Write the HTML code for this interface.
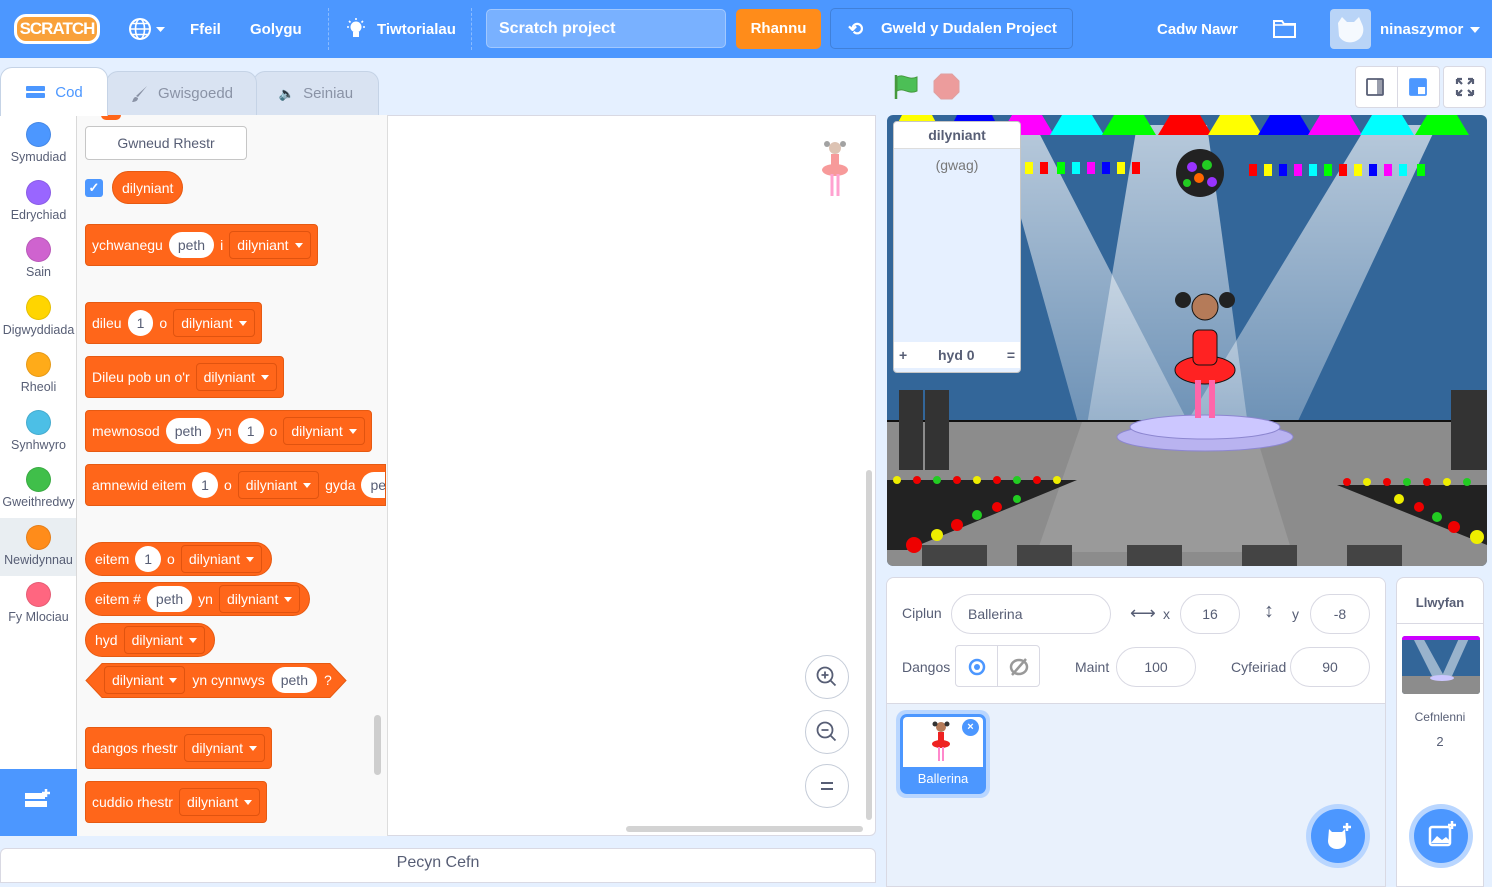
<!DOCTYPE html>
<html><head><meta charset="utf-8"><style>
*{box-sizing:border-box;margin:0;padding:0}
body{width:1492px;height:877px;overflow:hidden;background:#e5f0ff;font-family:"Liberation Sans",sans-serif;position:relative;color:#575e75}
.a{position:absolute}
.top{left:0;top:0;width:1492px;height:58px;background:#4c97ff;color:#fff;font-weight:bold;font-size:15px}
.top .a{white-space:nowrap}
.tab{top:71px;height:44px;background:#d9e3f2;border:1px solid #c5d3e6;border-bottom:none;border-radius:12px 12px 0 0;font-size:15px;color:#8a93a6;display:flex;align-items:center;justify-content:center;gap:8px}
.cat{width:77px;text-align:center;font-size:12.5px;color:#575e75}
.cat i{display:block;width:25px;height:25px;border-radius:50%;margin:0 auto 3px;border:1px solid rgba(0,0,0,.1)}
.blk{position:absolute;left:85px;height:42px;background:#ff661a;border:1px solid #e65a12;border-radius:4px;display:flex;align-items:center;padding:0 6px;gap:6px;color:#fff;font-size:14px;white-space:nowrap}
.blk.r{border-radius:17px;height:34px;padding:0 9px}
.in{background:#fff;color:#575e75;border-radius:13px;height:26px;padding:0 9px;display:flex;align-items:center}
.dd{border:1px solid #e0530f;background:#ff661a;height:28px;border-radius:4px;padding:0 7px;display:flex;align-items:center;gap:6px}
.dd:after{content:"";border:4px solid transparent;border-top:5px solid #fff;margin-top:4px}
.zb{left:805px;width:44px;height:44px;border-radius:50%;background:#fff;border:1px solid #c5ccd8;display:flex;align-items:center;justify-content:center}
.fld{background:#fff;border:1px solid #d9d9e3;border-radius:20px;height:40px;display:flex;align-items:center;font-size:14px;color:#575e75}
.lbl{font-size:14px;color:#575e75}
</style></head><body>
<div class="a top">
  <div class="a" style="left:14px;top:14px;width:86px;height:30px;background:#f9a13a;border:3px solid #fff;border-radius:12px;color:#fff;font-size:17px;text-align:center;line-height:24px;letter-spacing:-1px">SCRATCH</div>
  <svg class="a" style="left:128px;top:17px" width="40" height="24"><circle cx="12" cy="12" r="10" fill="none" stroke="#fff" stroke-width="2"/><ellipse cx="12" cy="12" rx="4.5" ry="10" fill="none" stroke="#fff" stroke-width="1.6"/><path d="M2 12h20M4 6.5h16M4 17.5h16" stroke="#fff" stroke-width="1.6"/><path d="M28 10h9l-4.5 5z" fill="#fff"/></svg>
  <div class="a" style="left:190px;top:21px">Ffeil</div>
  <div class="a" style="left:250px;top:21px">Golygu</div>
  <div class="a" style="left:328px;top:8px;height:42px;border-left:1px dashed rgba(255,255,255,.35)"></div>
  <svg class="a" style="left:343px;top:17px" width="26" height="26"><circle cx="13" cy="10" r="5.5" fill="#fff"/><rect x="10" y="15" width="6" height="5" fill="#fff"/><path d="M13 1v2M4 10h2M20 10h2M6 4l1.5 1.5M20 4l-1.5 1.5" stroke="#fff" stroke-width="1.6"/></svg>
  <div class="a" style="left:377px;top:21px">Tiwtorialau</div>
  <div class="a" style="left:471px;top:8px;height:42px;border-left:1px dashed rgba(255,255,255,.35)"></div>
  <div class="a" style="left:486px;top:9px;width:240px;height:39px;background:rgba(255,255,255,.25);border:1px solid rgba(255,255,255,.3);border-radius:5px;font-size:16px;line-height:37px;padding-left:12px">Scratch project</div>
  <div class="a" style="left:736px;top:9px;width:85px;height:40px;background:#ff8c1a;border-radius:5px;text-align:center;line-height:40px">Rhannu</div>
  <div class="a" style="left:830px;top:8px;width:243px;height:41px;border:1px solid rgba(0,0,0,.15);border-radius:5px;background:#4c97ff;line-height:40px;padding-left:50px">Gweld y Dudalen Project</div>
  <div class="a" style="left:848px;top:19px;font-size:18px">⟲</div>
  <div class="a" style="left:1157px;top:21px">Cadw Nawr</div>
  <svg class="a" style="left:1272px;top:17px" width="26" height="22"><path d="M2 4h8l2 3h11v13H2z" fill="none" stroke="#fff" stroke-width="2"/><path d="M2 8h21" stroke="#fff" stroke-width="1.5"/></svg>
  <div class="a" style="left:1330px;top:9px;width:41px;height:40px;background:#b9d4f7;border-radius:4px"><svg width="41" height="40"><path d="M8 14l4-6 5 5h7l5-5 3 7c3 6 1 14-6 17-6 3-14 1-17-5z" fill="#fff" opacity=".85"/></svg></div>
  <div class="a" style="left:1380px;top:21px">ninaszymor</div>
  <div class="a" style="left:1470px;top:27px;border:5px solid transparent;border-top:6px solid #fff"></div>
</div>

<div class="a tab" style="left:253px;width:126px"><span style="font-size:13px">🔈</span>Seiniau</div>
<div class="a tab" style="left:106px;width:151px"><svg width="20" height="20"><path d="M17 2L8 13l-2-1z" fill="#8a93a6"/><path d="M6 13c-3 0-3 4-4 5 3 0 6-1 6-4z" fill="#8a93a6"/></svg>Gwisgoedd</div>
<div class="a tab" style="left:0;top:67px;width:108px;height:49px;background:#fff;color:#4c97ff;border-color:#c5d3e6;z-index:2"><svg width="22" height="16"><rect x="1" y="2" width="19" height="5" rx="1" fill="#4c97ff"/><rect x="1" y="9" width="19" height="5" rx="1" fill="#4c97ff"/></svg>Cod</div>

<div class="a" style="left:0;top:115px;width:77px;height:721px;background:#fff;border-right:1px solid #d9d9d9"></div>
<div class="a cat" style="left:0;top:122px"><i style="background:#4c97ff"></i>Symudiad</div>
<div class="a cat" style="left:0;top:180px"><i style="background:#9966ff"></i>Edrychiad</div>
<div class="a cat" style="left:0;top:237px"><i style="background:#cf63cf"></i>Sain</div>
<div class="a cat" style="left:-3px;top:295px;width:83px"><i style="background:#ffd500"></i>Digwyddiada</div>
<div class="a cat" style="left:0;top:352px"><i style="background:#ffab19"></i>Rheoli</div>
<div class="a cat" style="left:0;top:410px"><i style="background:#4cbfe6"></i>Synhwyro</div>
<div class="a cat" style="left:0;top:467px"><i style="background:#40bf4a"></i>Gweithredwy</div>
<div class="a" style="left:0;top:518px;width:76px;height:58px;background:#e9eef2"></div>
<div class="a cat" style="left:0;top:525px;width:77px"><i style="background:#ff8c1a"></i>Newidynnau</div>
<div class="a cat" style="left:0;top:582px"><i style="background:#ff6680"></i>Fy Mlociau</div>
<div class="a" style="left:0;top:769px;width:77px;height:67px;background:#4c97ff"><svg style="margin:18px 0 0 24px" width="30" height="26"><rect x="1" y="6" width="20" height="6" fill="#fff"/><rect x="1" y="14" width="22" height="6" fill="#fff"/><path d="M22 2v8M18 6h8" stroke="#fff" stroke-width="2.5"/></svg></div>

<div class="a" style="left:77px;top:115px;width:311px;height:721px;background:#f9f9f9;border-right:1px solid #ddd"></div>
<div class="a" style="left:101px;top:115px;width:20px;height:5px;background:#ff661a;border-radius:0 0 8px 8px"></div>
<div class="a" style="left:85px;top:126px;width:162px;height:34px;border:1px solid #c6c6c6;border-radius:4px;background:#fff;font-size:14px;text-align:center;line-height:32px">Gwneud Rhestr</div>
<div class="a" style="left:85px;top:179px;width:18px;height:18px;background:#4c97ff;border-radius:3px;color:#fff;font-size:13px;text-align:center;line-height:18px;font-weight:bold">✓</div>
<div class="blk r" style="left:112px;top:171px;height:33px">dilyniant</div>
<div class="blk" style="top:224px">ychwanegu<span class="in">peth</span>i<span class="dd">dilyniant</span></div>
<div class="blk" style="top:302px">dileu<span class="in">1</span>o<span class="dd">dilyniant</span></div>
<div class="blk" style="top:356px">Dileu pob un o'r<span class="dd">dilyniant</span></div>
<div class="blk" style="top:410px">mewnosod<span class="in">peth</span>yn<span class="in">1</span>o<span class="dd">dilyniant</span></div>
<div class="blk" style="top:464px;width:301px;overflow:hidden;border-radius:4px 0 0 4px">amnewid eitem<span class="in">1</span>o<span class="dd">dilyniant</span>gyda<span class="in">peth</span></div>
<div class="blk r" style="top:542px">eitem<span class="in">1</span>o<span class="dd">dilyniant</span></div>
<div class="blk r" style="top:582px">eitem #<span class="in">peth</span>yn<span class="dd">dilyniant</span></div>
<div class="blk r" style="top:623px">hyd<span class="dd">dilyniant</span></div>
<svg class="a" style="left:85px;top:663px" width="262" height="35"><path d="M17 0.5h228l16 17-16 17H17L1 17.5z" fill="#ff661a" stroke="#e65a12"/></svg>
<div class="blk" style="left:98px;top:663px;height:34px;background:none;border:none;gap:7px">
<span class="dd">dilyniant</span>yn cynnwys<span class="in">peth</span>?</div>
<div class="blk" style="top:727px">dangos rhestr<span class="dd">dilyniant</span></div>
<div class="blk" style="top:781px">cuddio rhestr<span class="dd">dilyniant</span></div>
<div class="a" style="left:374px;top:715px;width:7px;height:60px;background:#cecece;border-radius:4px"></div>

<div class="a" style="left:388px;top:115px;width:488px;height:721px;background:#fff;border:1px solid #d9d9e3;border-left:none;border-radius:0 0 6px 0"></div>
<svg class="a" style="left:818px;top:138px" width="34" height="62" opacity=".45"><circle cx="17" cy="10" r="6" fill="#b57b59"/><circle cx="9" cy="6" r="3" fill="#333"/><circle cx="25" cy="6" r="3" fill="#333"/><rect x="13" y="16" width="8" height="14" fill="#e22"/><ellipse cx="17" cy="32" rx="13" ry="6" fill="#e22"/><path d="M14 36v22M20 36v22" stroke="#f39" stroke-width="3"/></svg>
<div class="a zb" style="top:655px"><svg width="24" height="24"><circle cx="10" cy="10" r="7.5" fill="none" stroke="#575e75" stroke-width="1.8"/><path d="M15.5 15.5l5 5M6.5 10h7M10 6.5v7" stroke="#575e75" stroke-width="1.8"/></svg></div>
<div class="a zb" style="top:710px"><svg width="24" height="24"><circle cx="10" cy="10" r="7.5" fill="none" stroke="#575e75" stroke-width="1.8"/><path d="M15.5 15.5l5 5M6.5 10h7" stroke="#575e75" stroke-width="1.8"/></svg></div>
<div class="a zb" style="top:764px"><svg width="24" height="24"><path d="M6 9h12M6 15h12" stroke="#575e75" stroke-width="2"/></svg></div>
<div class="a" style="left:626px;top:826px;width:237px;height:6px;background:#d3d3d3;border-radius:3px"></div>
<div class="a" style="left:866px;top:470px;width:6px;height:350px;background:#d3d3d3;border-radius:3px"></div>

<div class="a" style="left:0;top:848px;width:876px;height:35px;background:#fff;border:1px solid #d9d9e3;border-radius:6px 6px 0 0;text-align:center;font-size:16px;padding-top:5px">Pecyn Cefn</div>

<svg class="a" style="left:893px;top:73px" width="28" height="28"><path d="M3 2v24" stroke="#45993d" stroke-width="2.5"/><path d="M4 4c7-4 11 4 20 0v14c-9 4-13-4-20 0z" fill="#4cbf56" stroke="#45993d"/></svg>
<svg class="a" style="left:933px;top:73px" width="27" height="27"><path d="M8 1h11l7 7v11l-7 7H8l-7-7V8z" fill="#ec9c9c" stroke="#e0a0a0"/></svg>
<div class="a" style="left:1355px;top:66px;width:85px;height:42px;background:#fff;border:1px solid #d9d9e3;border-radius:4px"></div>
<div class="a" style="left:1397px;top:66px;height:42px;border-left:1px solid #d9d9e3"></div>
<svg class="a" style="left:1365px;top:77px" width="20" height="20"><rect x="2" y="2" width="16" height="16" rx="1" fill="none" stroke="#575e75" stroke-width="1.8"/><rect x="12" y="2" width="6" height="16" fill="#575e75" opacity=".6"/></svg>
<svg class="a" style="left:1408px;top:77px" width="20" height="20"><rect x="2" y="2" width="16" height="16" rx="1" fill="#fff" stroke="#4c97ff" stroke-width="1.8"/><rect x="2" y="2" width="8" height="16" fill="#4c97ff"/><rect x="10" y="2" width="8" height="8" fill="#4c97ff"/></svg>
<div class="a" style="left:1443px;top:66px;width:43px;height:42px;background:#fff;border:1px solid #d9d9e3;border-radius:4px"></div>
<svg class="a" style="left:1455px;top:77px" width="20" height="20"><path d="M2 2l5 5M18 2l-5 5M2 18l5-5M18 18l-5-5M2 2h5M2 2v5M18 2h-5M18 2v5M2 18h5M2 18v-5M18 18h-5M18 18v-5" stroke="#575e75" stroke-width="2.2"/></svg>

<svg class="a" style="left:887px;top:115px;border-radius:6px" width="600" height="451" viewBox="0 0 600 451">
<defs><linearGradient id="bm" x1="0" y1="0" x2="0" y2="1"><stop offset="0" stop-color="#fff" stop-opacity=".65"/><stop offset="1" stop-color="#fff" stop-opacity=".25"/></linearGradient></defs>
<rect width="600" height="451" fill="#336699"/>
<g fill="url(#bm)">
<path d="M108 10h40l170 330H200z"/><path d="M250 10h70l45 330H195z"/><path d="M480 10h70L395 340H280z"/></g>
<g>
<path d="M15 0h30l8 15H7z" fill="#ff0"/><path d="M70 0h35l6 12H64z" fill="#00f"/><path d="M125 0h30l12 20H113z" fill="#f0f"/><path d="M175 0h30l12 20H163z" fill="#0ff"/><path d="M227 0h30l12 20H215z" fill="#0f0"/><path d="M283 0h30l12 20H271z" fill="#f00"/><path d="M333 0h30l12 20H321z" fill="#ff0"/><path d="M383 0h30l12 20H371z" fill="#00f"/><path d="M433 0h30l12 20H421z" fill="#f0f"/><path d="M485 0h30l12 20H473z" fill="#0ff"/><path d="M540 0h30l12 20H528z" fill="#0f0"/>
</g>
<g>
<rect x="138" y="47" width="8" height="12" fill="#ff0"/><rect x="153" y="47" width="8" height="12" fill="#f00"/><rect x="170" y="47" width="8" height="12" fill="#0f0"/><rect x="185" y="47" width="8" height="12" fill="#0ff"/><rect x="200" y="47" width="8" height="12" fill="#f0f"/><rect x="215" y="47" width="8" height="12" fill="#00f"/><rect x="230" y="47" width="8" height="12" fill="#ff0"/><rect x="245" y="47" width="8" height="12" fill="#f00"/>
<rect x="362" y="49" width="8" height="12" fill="#f00"/><rect x="377" y="49" width="8" height="12" fill="#ff0"/><rect x="392" y="49" width="8" height="12" fill="#00f"/><rect x="407" y="49" width="8" height="12" fill="#f0f"/><rect x="422" y="49" width="8" height="12" fill="#0ff"/><rect x="437" y="49" width="8" height="12" fill="#0f0"/><rect x="452" y="49" width="8" height="12" fill="#f00"/><rect x="467" y="49" width="8" height="12" fill="#ff0"/><rect x="482" y="49" width="8" height="12" fill="#00f"/><rect x="497" y="49" width="8" height="12" fill="#f0f"/><rect x="512" y="49" width="8" height="12" fill="#0ff"/><rect x="530" y="49" width="8" height="12" fill="#0f0"/>
</g>
<circle cx="313" cy="58" r="24" fill="#222"/><circle cx="305" cy="52" r="5" fill="#93f"/><circle cx="320" cy="50" r="5" fill="#2c2"/><circle cx="312" cy="63" r="5" fill="#f60"/><circle cx="300" cy="68" r="4" fill="#2c2"/><circle cx="325" cy="67" r="5" fill="#93f"/>
<path d="M0 307h600v144H0z" fill="#8c8c8c"/><path d="M0 306h600" stroke="#111" stroke-width="2"/>
<path d="M195 307h170l40 130H150z" fill="#fff" opacity=".12"/>
<ellipse cx="318" cy="322" rx="88" ry="14" fill="#b9b3f0" stroke="#8c86d0"/><ellipse cx="318" cy="312" rx="75" ry="12" fill="#ccc7ff" stroke="#8c86d0"/>
<g fill="#333"><rect x="12" y="275" width="24" height="80"/><rect x="38" y="275" width="24" height="80"/><rect x="564" y="275" width="24" height="80"/><rect x="588" y="275" width="12" height="80"/></g>
<g fill="#222"><path d="M0 365h190l-170 70H0z"/><path d="M600 370H450l150 60z"/></g>
<g fill="#444"><rect x="35" y="430" width="65" height="21"/><rect x="130" y="430" width="55" height="21"/><rect x="240" y="430" width="55" height="21"/><rect x="355" y="430" width="55" height="21"/><rect x="460" y="430" width="55" height="21"/></g>
<g><circle cx="27" cy="430" r="8" fill="#e00"/><circle cx="50" cy="420" r="6" fill="#ee0"/><circle cx="70" cy="410" r="6" fill="#e00"/><circle cx="90" cy="400" r="5" fill="#2c2"/><circle cx="110" cy="392" r="5" fill="#e00"/><circle cx="130" cy="384" r="4" fill="#2c2"/>
<circle cx="10" cy="365" r="4" fill="#ee0"/><circle cx="30" cy="365" r="4" fill="#e00"/><circle cx="50" cy="365" r="4" fill="#2c2"/><circle cx="70" cy="365" r="4" fill="#e00"/><circle cx="90" cy="365" r="4" fill="#ee0"/><circle cx="110" cy="365" r="4" fill="#e00"/><circle cx="130" cy="365" r="4" fill="#2c2"/><circle cx="150" cy="365" r="4" fill="#e00"/><circle cx="170" cy="365" r="4" fill="#ee0"/>
<circle cx="590" cy="422" r="7" fill="#ee0"/><circle cx="567" cy="412" r="6" fill="#e00"/><circle cx="550" cy="402" r="5" fill="#2c2"/><circle cx="532" cy="392" r="5" fill="#e00"/><circle cx="512" cy="384" r="5" fill="#ee0"/>
<circle cx="460" cy="367" r="4" fill="#e00"/><circle cx="480" cy="367" r="4" fill="#ee0"/><circle cx="500" cy="367" r="4" fill="#e00"/><circle cx="520" cy="367" r="4" fill="#2c2"/><circle cx="540" cy="367" r="4" fill="#e00"/><circle cx="560" cy="367" r="4" fill="#ee0"/><circle cx="580" cy="367" r="4" fill="#2c2"/></g>
<ellipse cx="318" cy="255" rx="30" ry="14" fill="#f22" stroke="#111"/><rect x="306" y="215" width="24" height="35" rx="6" fill="#f22" stroke="#111"/><circle cx="318" cy="192" r="13" fill="#b57b59" stroke="#111"/><circle cx="296" cy="185" r="8" fill="#222"/><circle cx="340" cy="185" r="8" fill="#222"/><path d="M311 265v38M325 265v38" stroke="#f6a" stroke-width="6"/>
</svg>
<div class="a" style="left:893px;top:121px;width:128px;height:252px;background:#e6f0ff;border:1px solid #c6c6c6;border-radius:4px;overflow:hidden">
  <div style="background:#fff;height:27px;text-align:center;font-weight:bold;font-size:14px;line-height:27px;border-bottom:1px solid #ddd">dilyniant</div>
  <div style="text-align:center;font-size:14px;margin-top:8px;color:#777">(gwag)</div>
  <div class="a" style="left:0;bottom:4px;width:126px;height:26px;background:#fff;font-size:14px;font-weight:bold;line-height:26px"><span style="position:absolute;left:5px">+</span><span style="position:absolute;left:44px">hyd 0</span><span style="position:absolute;right:5px">=</span></div>
</div>

<div class="a" style="left:886px;top:577px;width:500px;height:310px;background:#e9f1fc;border:1px solid #d9d9e3;border-radius:8px 8px 0 0;overflow:hidden">
  <div style="height:126px;background:#fff;border-bottom:1px solid #d9d9e3"></div>
</div>
<div class="a lbl" style="left:902px;top:605px">Ciplun</div>
<div class="a fld" style="left:951px;top:594px;width:160px;padding-left:16px">Ballerina</div>
<div class="a" style="left:1130px;top:603px;font-size:18px;color:#575e75">⟷</div>
<div class="a lbl" style="left:1163px;top:606px">x</div>
<div class="a fld" style="left:1180px;top:594px;width:60px;justify-content:center">16</div>
<div class="a" style="left:1264px;top:600px;font-size:20px;color:#575e75">↕</div>
<div class="a lbl" style="left:1292px;top:606px">y</div>
<div class="a fld" style="left:1310px;top:594px;width:60px;justify-content:center">-8</div>
<div class="a lbl" style="left:902px;top:659px">Dangos</div>
<div class="a" style="left:955px;top:645px;width:85px;height:42px;background:#fff;border:1px solid #d9d9e3;border-radius:4px"></div>
<div class="a" style="left:997px;top:645px;height:42px;border-left:1px solid #d9d9e3"></div>
<svg class="a" style="left:966px;top:656px" width="22" height="22"><circle cx="11" cy="11" r="7" fill="none" stroke="#4c97ff" stroke-width="2.5"/><circle cx="11" cy="11" r="3" fill="#4c97ff"/></svg>
<svg class="a" style="left:1008px;top:656px" width="22" height="22"><ellipse cx="11" cy="11" rx="8" ry="7" fill="none" stroke="#999" stroke-width="2.5"/><path d="M4 19L18 3" stroke="#999" stroke-width="2.5"/></svg>
<div class="a lbl" style="left:1075px;top:659px">Maint</div>
<div class="a fld" style="left:1116px;top:647px;width:80px;justify-content:center">100</div>
<div class="a lbl" style="left:1231px;top:659px">Cyfeiriad</div>
<div class="a fld" style="left:1290px;top:647px;width:80px;justify-content:center">90</div>
<div class="a" style="left:896px;top:710px;width:94px;height:88px;border-radius:10px;background:#b9d6ff"></div>
<div class="a" style="left:900px;top:714px;width:86px;height:80px;border-radius:7px;background:#4c97ff;overflow:hidden"><div style="margin:3px;height:50px;background:#fff;border-radius:4px 4px 0 0"></div><div style="color:#fff;font-size:13px;text-align:center;margin-top:4px">Ballerina</div></div>
<svg class="a" style="left:928px;top:719px" width="26" height="46"><circle cx="13" cy="8" r="5" fill="#b57b59"/><circle cx="7" cy="5" r="2.5" fill="#333"/><circle cx="19" cy="5" r="2.5" fill="#333"/><rect x="10" y="13" width="6" height="10" fill="#e22"/><ellipse cx="13" cy="25" rx="9" ry="4" fill="#e22"/><path d="M11 28v14M15 28v14" stroke="#f8c" stroke-width="2"/></svg>
<div class="a" style="left:962px;top:719px;width:17px;height:17px;border-radius:50%;background:#4c97ff;color:#fff;font-size:11px;text-align:center;line-height:17px;font-weight:bold">×</div>
<div class="a" style="left:1306px;top:804px;width:64px;height:64px;border-radius:50%;background:#b9d6ff"></div>
<div class="a" style="left:1311px;top:809px;width:54px;height:54px;border-radius:50%;background:#4c97ff"><svg width="54" height="54"><path d="M18 20l3 3h10l3-3 1 12c0 5-4 8-9 8s-9-3-9-8z" fill="#fff"/><path d="M36 14v8M32 18h8" stroke="#fff" stroke-width="2.5"/></svg></div>

<div class="a" style="left:1396px;top:577px;width:88px;height:310px;background:#fff;border:1px solid #d9d9e3;border-radius:8px 8px 0 0"></div>
<div class="a" style="left:1397px;top:623px;width:86px;border-top:1px solid #d9d9e3"></div>
<div class="a" style="left:1396px;top:595px;width:88px;text-align:center;font-size:13px;font-weight:bold">Llwyfan</div>
<svg class="a" style="left:1402px;top:636px;border-radius:3px" width="78" height="58"><rect width="78" height="58" fill="#336699"/><path d="M10 0h10l22 40H30zM58 0h10L50 40H40z" fill="#fff" opacity=".5"/><rect y="40" width="78" height="18" fill="#8c8c8c"/><ellipse cx="40" cy="42" rx="12" ry="3" fill="#ccc7ff"/><rect y="0" width="78" height="4" fill="#c0f"/></svg>
<div class="a" style="left:1396px;top:710px;width:88px;text-align:center;font-size:12px">Cefnlenni</div>
<div class="a" style="left:1396px;top:734px;width:88px;text-align:center;font-size:13px">2</div>
<div class="a" style="left:1409px;top:804px;width:64px;height:64px;border-radius:50%;background:#b9d6ff"></div>
<div class="a" style="left:1414px;top:809px;width:54px;height:54px;border-radius:50%;background:#4c97ff"><svg width="54" height="54"><rect x="16" y="18" width="20" height="18" rx="2" fill="none" stroke="#fff" stroke-width="2.5"/><path d="M17 34l6-7 5 4 4-3 4 4v2H17z" fill="#fff"/><path d="M38 12v8M34 16h8" stroke="#fff" stroke-width="2.5"/></svg></div>
</body></html>
